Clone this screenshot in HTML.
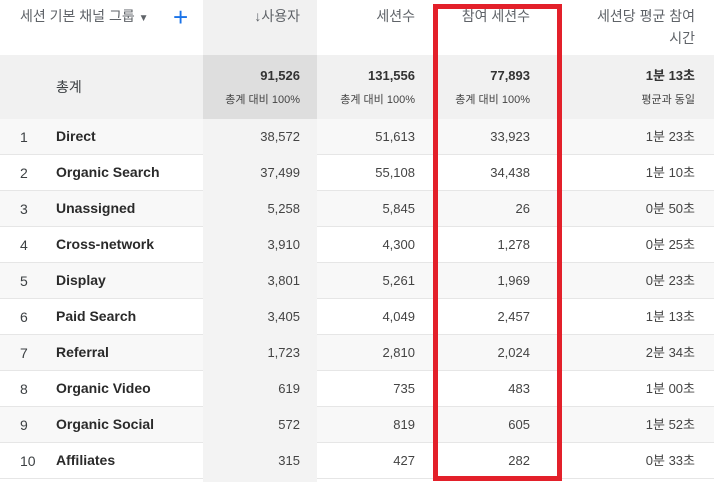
<!DOCTYPE html>
<html><head><meta charset="utf-8"><style>
*{margin:0;padding:0;box-sizing:border-box}
body{width:714px;height:482px;overflow:hidden;background:#fff;font-family:"Liberation Sans","Noto Sans CJK KR",sans-serif;color:#3c4043;position:relative}
.hdr{position:absolute;top:0;height:55px;font-size:14px;color:#5f6368;text-align:right;line-height:22px;padding-top:5px}
.row{position:absolute;left:0;width:714px;height:36px;border-bottom:1px solid #e6e6e6}
.row span{position:absolute;top:10px;font-size:13px;color:#444;line-height:16px}
.row .i{left:20px;font-size:14px;color:#3c4043}
.row .l{left:56px;font-size:14px;font-weight:bold;color:#2a2a2a;top:9px}
.v{position:absolute;z-index:2;text-align:right;font-size:13px;color:#444;line-height:16px}
</style></head><body>
<div style="position:absolute;top:55px;left:0;width:714px;height:64px;background:#f1f1f1"></div>
<div id="rows"></div>
<div style="position:absolute;left:203px;top:0;width:114px;height:55px;background:#f1f1f1"></div>
<div style="position:absolute;left:203px;top:55px;width:114px;height:64px;background:#dedede"></div>
<div style="position:absolute;left:203px;top:119px;width:114px;height:363px;background:#f3f3f3"></div>
<div class="hdr" style="left:20px;text-align:left;color:#5f6368">세션 기본 채널 그룹 <span style="font-size:10px">▼</span></div>
<div style="position:absolute;left:173px;top:2px;font-size:26px;color:#1a73e8;line-height:30px">+</div>
<div class="hdr" style="left:203px;width:97px">↓사용자</div>
<div class="hdr" style="left:317px;width:98px">세션수</div>
<div class="hdr" style="left:433px;width:97px">참여 세션수</div>
<div class="hdr" style="left:561px;width:134px">세션당 평균 참여<br>시간</div>
<div style="position:absolute;left:56px;top:78px;font-size:14px;color:#3c4043;line-height:18px">총계</div>
<div class="v" style="left:203px;width:97px;top:68px;font-weight:bold;color:#333">91,526</div>
<div class="v" style="left:203px;width:97px;top:92px;font-size:11px">총계 대비 100%</div>
<div class="v" style="left:317px;width:98px;top:68px;font-weight:bold;color:#333">131,556</div>
<div class="v" style="left:317px;width:98px;top:92px;font-size:11px">총계 대비 100%</div>
<div class="v" style="left:433px;width:97px;top:68px;font-weight:bold;color:#333">77,893</div>
<div class="v" style="left:433px;width:97px;top:92px;font-size:11px">총계 대비 100%</div>
<div class="v" style="left:561px;width:134px;top:68px;font-weight:bold;color:#333">1분 13초</div>
<div class="v" style="left:561px;width:134px;top:92px;font-size:11px">평균과 동일</div>
<div style="position:absolute;left:433px;top:4px;width:129px;height:477px;border:5px solid #e3202a;z-index:3"></div>
<script>
var d=[["Direct","38,572","51,613","33,923","1분 23초"],["Organic Search","37,499","55,108","34,438","1분 10초"],["Unassigned","5,258","5,845","26","0분 50초"],["Cross-network","3,910","4,300","1,278","0분 25초"],["Display","3,801","5,261","1,969","0분 23초"],["Paid Search","3,405","4,049","2,457","1분 13초"],["Referral","1,723","2,810","2,024","2분 34초"],["Organic Video","619","735","483","1분 00초"],["Organic Social","572","819","605","1분 52초"],["Affiliates","315","427","282","0분 33초"]];
var h="";
d.forEach(function(r,i){var t=119+i*36;
h+='<div class="row" style="top:'+t+'px;background:'+(i%2==0?'#f8f8f8':'#fff')+'"><span class="i">'+(i+1)+'</span><span class="l">'+r[0]+'</span></div>';
h+='<div class="v" style="top:'+(t+10)+'px;left:203px;width:97px">'+r[1]+'</div>';
h+='<div class="v" style="top:'+(t+10)+'px;left:317px;width:98px">'+r[2]+'</div>';
h+='<div class="v" style="top:'+(t+10)+'px;left:433px;width:97px">'+r[3]+'</div>';
h+='<div class="v" style="top:'+(t+10)+'px;left:561px;width:134px">'+r[4]+'</div>';
});
document.getElementById("rows").innerHTML=h;
</script>
</body></html>
